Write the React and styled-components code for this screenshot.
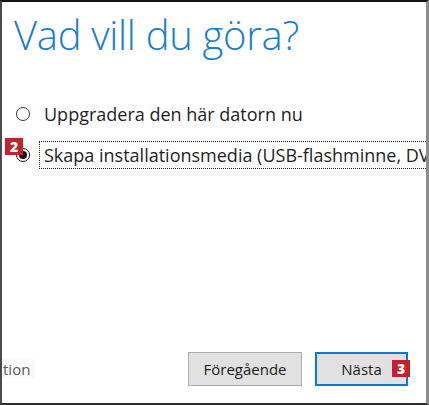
import React from 'react';
import styled, { createGlobalStyle } from 'styled-components';

const GlobalStyle = createGlobalStyle`
  html, body {
    margin: 0;
    padding: 0;
    background: #ffffff;
  }
  body {
    font-family: "Open Sans", "Noto Sans", sans-serif;
  }
`;

const Frame = styled('div')`
  width: 429px;
  height: 405px;
  box-sizing: border-box;
  border-top: 2px solid #141414;
  border-left: 2px solid #4a4a4a;
  border-bottom: 2px solid #2e2e2e;
  border-right: 3px solid #8c8c8c;
  background: #ffffff;
  display: flex;
  flex-direction: column;
  overflow: hidden;
`;

const Title = styled('h1')`
  margin: 7px 0 0 12px;
  font-family: "Open Sans", sans-serif;
  font-weight: 300;
  font-size: 40px;
  line-height: 52px;
  color: #1b7dcd;
  letter-spacing: -0.3px;
`;

const Options = styled('div')`
  margin-top: 39px;
  display: flex;
  flex-direction: column;
  gap: 13px;
`;

const OptionRow = styled('label')`
  position: relative;
  display: flex;
  align-items: center;
  height: 28px;
  padding-left: 14px;
  white-space: nowrap;
`;

const Radio = styled('span')`
  width: 14px;
  height: 14px;
  box-sizing: border-box;
  border-radius: 50%;
  border: 1px solid ${(props) => props.checked ? '#1a1a1a' : '#3c3c3c'};
  display: flex;
  align-items: center;
  justify-content: center;
  flex: none;

  ${(props) => props.checked ? `
    &::after {
      content: '';
      width: 8px;
      height: 8px;
      border-radius: 50%;
      background: #111111;
    }
  ` : ''};
`;

const OptionText = styled('span')`
  margin-left: 12px;
  font-size: 18px;
  color: #1e1e1e;
  line-height: 26px;
  padding: 0 2px;
  ${(props) => props.focused ? `
    outline: 1px dotted #222222;
    outline-offset: 0;
    flex: 1;
    margin-left: 10px;
    padding-left: 4px;
  ` : ''};
`;

const Badge = styled('span')`
  position: absolute;
  width: 18px;
  height: 17px;
  background: #c1222b;
  color: #ffffff;
  font-family: "Open Sans", sans-serif;
  font-weight: 800;
  font-size: 14px;
  line-height: 17px;
  text-align: center;
  ${(props) => props.corner === 'left' ? `
    left: 3px;
    top: -3px;
  ` : `
    right: -4px;
    top: 6px;
  `};
`;

const Spacer = styled('div')`
  flex: 1;
`;

const Footer = styled('div')`
  display: flex;
  align-items: center;
  padding: 0 18px 17px 0;
`;

const FooterLink = styled('span')`
  font-size: 15px;
  color: #5a5a5a;
  background: #fafafa;
  padding: 0 5px 0 1px;
`;

const Buttons = styled('div')`
  margin-left: auto;
  display: flex;
  gap: 13px;
`;

const Button = styled('button')`
  position: relative;
  height: 34px;
  width: ${(props) => props.width}px;
  box-sizing: border-box;
  background: #e1e1e1;
  border: ${(props) => props.primary ? '2px solid #0a78d4' : '1px solid #acacac'};
  font-family: "Open Sans", sans-serif;
  font-size: 15px;
  color: #1c1c1c;
  padding: 0;
  cursor: pointer;
`;

export default function App() {
  return (
    <>
      <GlobalStyle />
      <Frame>
        <Title>Vad vill du göra?</Title>
        <Options>
          <OptionRow>
            <Radio />
            <OptionText>Uppgradera den här datorn nu</OptionText>
          </OptionRow>
          <OptionRow>
            <Radio checked />
            <OptionText focused>Skapa installationsmedia (USB-flashminne, DVD eller ISO-fil) för en annan dator</OptionText>
            <Badge corner="left">2</Badge>
          </OptionRow>
        </Options>
        <Spacer />
        <Footer>
          <FooterLink>tion</FooterLink>
          <Buttons>
            <Button width={114}>Föregående</Button>
            <Button width={93} primary>
              Nästa
              <Badge corner="right">3</Badge>
            </Button>
          </Buttons>
        </Footer>
      </Frame>
    </>
  );
}
